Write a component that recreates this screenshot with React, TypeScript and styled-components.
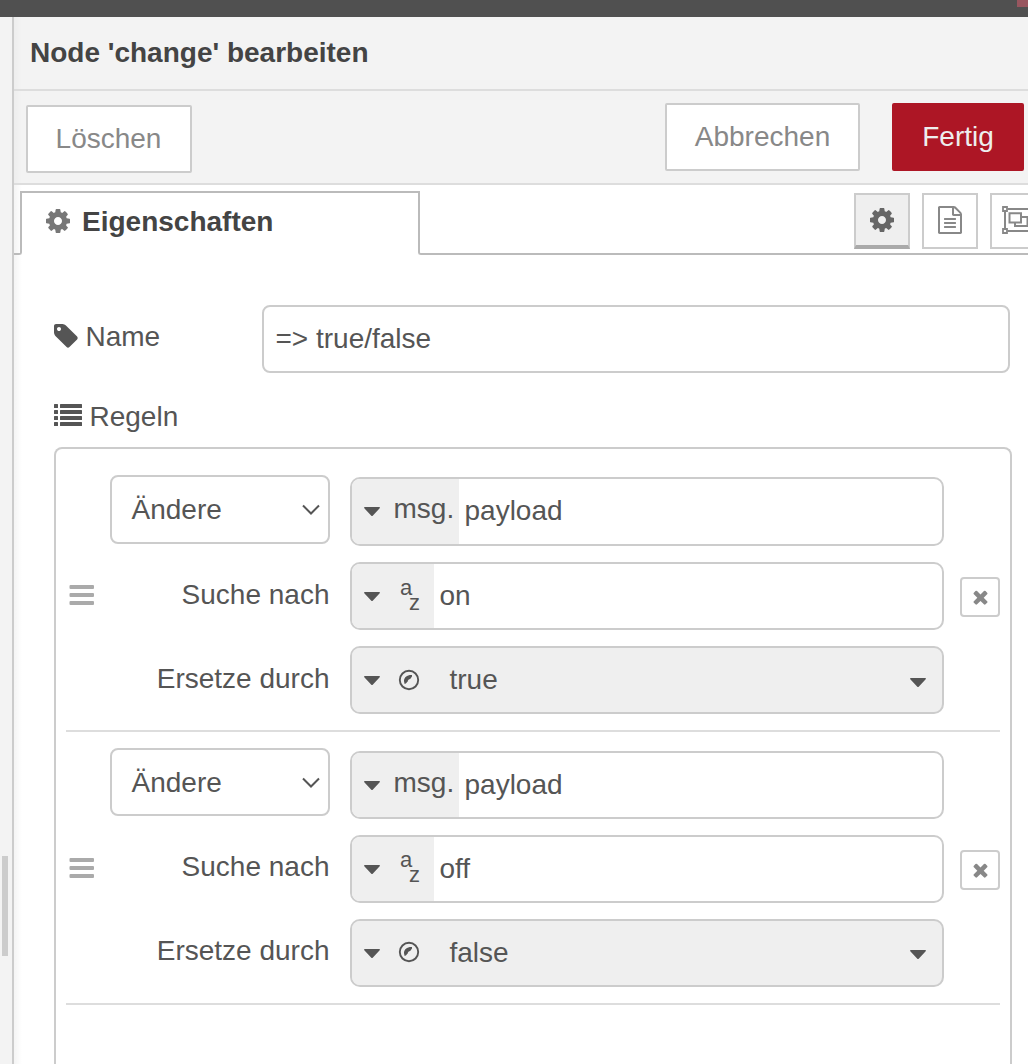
import React from "react";
import styled, { createGlobalStyle } from "styled-components";

const GlobalStyle = createGlobalStyle`
  * { box-sizing: border-box; }
  html, body { margin: 0; padding: 0; }
  body {
    width: 1028px;
    height: 1064px;
    overflow: hidden;
    background: #fff;
    color: #555;
    font-family: "Liberation Sans", Arial, Helvetica, sans-serif;
    font-size: 28px;
    line-height: 32px;
  }
  button, input { font: inherit; color: inherit; }
  svg { display: block; flex: none; }
`;

const Page = styled.div`
  display: flex;
  flex-direction: column;
  width: 1028px;
  height: 1064px;
  overflow: hidden;
`;

const TopBar = styled.header`
  display: flex;
  justify-content: flex-end;
  flex: none;
  height: 17px;
  background: #505050;
`;

const DeployEdge = styled.div`
  width: 11px;
  height: 7px;
  background: #98565f;
`;

const Main = styled.div`
  display: flex;
  flex: 1;
  min-height: 0;
`;

const Separator = styled.div`
  flex: none;
  width: 14px;
  padding: 839px 0 0 2px;
  background: #f3f3f3;
  border-right: 2px solid #ccc;
`;

const Grip = styled.div`
  width: 6px;
  height: 100px;
  background: #ccc;
`;

const Tray = styled.section`
  display: flex;
  flex-direction: column;
  flex: 1;
  min-width: 0;
  overflow: hidden;
  background: linear-gradient(to right, rgba(0, 0, 0, 0.045), rgba(0, 0, 0, 0) 8px) #fff;
`;

const TrayHeader = styled.h1`
  flex: none;
  height: 74px;
  margin: 0;
  padding: 20px 16px 0;
  background: rgba(231, 231, 231, 0.5);
  border-bottom: 2px solid #ddd;
  color: #444;
  font-size: 28px;
  font-weight: bold;
  line-height: 32px;
`;

const TrayToolbar = styled.div`
  display: flex;
  align-items: flex-start;
  flex: none;
  height: 94px;
  padding: 12px 4px 0 12px;
  background: rgba(231, 231, 231, 0.5);
  border-bottom: 2px solid #ddd;
`;

const Button = styled.button<{ $width: number; $primary?: boolean }>`
  width: ${(p) => p.$width}px;
  height: 68px;
  padding: 0;
  border: 2px solid ${(p) => (p.$primary ? "#ad1625" : "#ccc")};
  border-radius: 2px;
  background: ${(p) => (p.$primary ? "#ad1625" : "#fff")};
  color: ${(p) => (p.$primary ? "#eee" : "#888")};
`;

const DeleteButton = styled(Button)`
  margin: 2px auto 0 0;
  padding-right: 1px;
`;

const DoneButton = styled(Button)`
  margin-left: 32px;
`;

const TabBar = styled.div`
  display: flex;
  align-items: flex-start;
  flex: none;
  height: 70px;
  padding-top: 6px;
`;

const TabLead = styled.div`
  flex: none;
  width: 8px;
  height: 64px;
  border: solid #bbb;
  border-width: 0 2px 2px 0;
  border-bottom-right-radius: 3px;
`;

const Tab = styled.div`
  display: flex;
  align-items: flex-start;
  flex: none;
  width: 396px;
  height: 64px;
  padding: 12px 0 0 22px;
  border-top: 2px solid #bbb;
  color: #444;
  font-weight: bold;
`;

const TabIcon = styled.span`
  padding-top: 2px;
  color: #777;
`;

const TabText = styled.span`
  padding: 1px 0 0 10px;
`;

const TabTools = styled.div`
  display: flex;
  flex: 1;
  gap: 12px;
  min-width: 0;
  height: 64px;
  padding: 2px 0 0 434px;
  overflow: hidden;
  border: solid #bbb;
  border-width: 0 0 2px 2px;
  border-bottom-left-radius: 3px;
`;

const ToolButton = styled.button<{ $active?: boolean }>`
  display: flex;
  align-items: center;
  justify-content: center;
  flex: none;
  width: 56px;
  height: 56px;
  padding: ${(p) => (p.$active ? "0" : "0 0 2px")};
  border: 2px solid #ccc;
  ${(p) => p.$active && "border-bottom: 4px solid #aaa;"}
  background: ${(p) => (p.$active ? "#efefef" : "#fff")};
  color: ${(p) => (p.$active ? "#666" : "#888")};
`;

const Form = styled.form`
  display: flex;
  flex-direction: column;
  flex: 1;
  min-height: 0;
  padding: 50px 16px 0 40px;
`;

const NameRow = styled.div`
  display: flex;
  flex: none;
  height: 68px;
  padding-right: 2px;
`;

const NameLabel = styled.label`
  display: flex;
  gap: 5.5px;
  width: 208px;
  padding-top: 16px;
`;

const LabelIcon = styled.span`
  width: 26px;
  height: 28px;
  padding-top: 1px;
`;

const NameInput = styled.input`
  flex: 1;
  min-width: 0;
  padding: 0 12px 0 11.5px;
  border: 2px solid #ccc;
  border-radius: 8px;
  background: #fff;
  outline: none;
`;

const RulesLabel = styled.div`
  display: flex;
  flex: none;
  gap: 7.5px;
  height: 74px;
  padding-top: 28px;
`;

const RuleList = styled.ol`
  flex: 1;
  min-height: 0;
  margin: 0;
  padding: 8px 10px 0;
  list-style: none;
  border: 2px solid #ccc;
  border-bottom: 0;
  border-radius: 8px 8px 0 0;
`;

const RuleItem = styled.li<{ $top: number }>`
  display: flex;
  align-items: flex-start;
  padding: ${(p) => p.$top}px 0 16px;
  border-bottom: 2px solid #ddd;
`;

const Handle = styled.span`
  display: flex;
  width: 44px;
  padding: 110px 0 0 3px;
  color: #aaa;
`;

const Labels = styled.div`
  display: flex;
  flex-direction: column;
  width: 220px;
  text-align: right;
`;

const Select = styled.div<{ $height: number }>`
  display: flex;
  justify-content: space-between;
  height: ${(p) => p.$height}px;
  padding: 17px 8px 0 19.5px;
  border: 2px solid #ccc;
  border-radius: 8px;
  background: #fff;
`;

const SelectArrow = styled.span`
  padding-top: 10px;
`;

const FieldLabel = styled.span<{ $gap: number }>`
  padding: ${(p) => p.$gap}px 0.5px 0 0;
`;

const Fields = styled.div<{ $offset: number }>`
  display: flex;
  flex-direction: column;
  gap: 16px;
  width: 594px;
  margin-left: 20px;
  padding-top: ${(p) => p.$offset}px;
`;

const TypedInput = styled.div<{ $height?: number; $filled?: boolean }>`
  display: flex;
  height: ${(p) => p.$height ?? 68}px;
  overflow: hidden;
  border: 2px solid #ccc;
  border-radius: 10px;
  background: ${(p) => (p.$filled ? "#efefef" : "#fff")};
`;

const TypeButton = styled.span<{ $width: number }>`
  display: flex;
  align-items: flex-start;
  flex: none;
  width: ${(p) => p.$width}px;
  padding-left: 12px;
  background: #efefef;
`;

const CaretBox = styled.span`
  padding-top: 28px;
`;

const MessagePrefix = styled.span`
  padding: 14px 0 0 13.5px;
`;

const TypeIcon = styled.span<{ $top: number }>`
  padding: ${(p) => p.$top}px 0 0 18px;
`;

const Value = styled.span<{ $left?: number }>`
  flex: 1;
  padding: 16px 0 0 ${(p) => p.$left ?? 5.5}px;
`;

const OptionCaret = styled.span<{ $top: number }>`
  padding: ${(p) => p.$top}px 16px 0 0;
`;

const RemoveButton = styled.button`
  display: flex;
  align-items: center;
  justify-content: center;
  width: 40px;
  height: 40px;
  margin: 102px 0 0 16px;
  padding: 2px 0 0;
  border: 2px solid #ccc;
  border-radius: 4px;
  background: #fff;
  color: #888;
`;

const Letters = styled.span`
  display: flex;
  width: 22px;
  padding-left: 2px;
  font-size: 22px;
  line-height: 22px;
`;

const Letter = styled.span<{ $shift: number }>`
  width: 9px;
  margin-top: ${(p) => p.$shift}px;
`;

const CogIcon = () => (
  <svg width="28" height="28" viewBox="0 0 1792 1792" fill="currentColor">
    <path d="M1152 896q0-106-75-181t-181-75-181 75-75 181 75 181 181 75 181-75 75-181zm512-109v222q0 12-8 23t-20 13l-185 28q-19 54-39 91 35 50 107 138 10 12 10 25t-9 23q-27 37-99 108t-94 71q-12 0-26-9l-138-108q-44 23-91 38-16 136-29 186-7 28-36 28h-222q-14 0-24.5-8.5t-11.5-21.5l-28-184q-49-16-90-37l-141 107q-10 9-25 9-14 0-25-11-126-114-165-168-7-10-7-23 0-12 8-23 15-21 51-66.5t54-70.5q-27-50-41-99l-183-27q-13-2-21-12.5t-8-23.5v-222q0-12 8-23t19-13l186-28q14-46 39-92-40-57-107-138-10-12-10-24 0-10 9-23 26-36 98.5-107.5t94.5-71.5q13 0 26 10l138 107q44-23 91-38 16-136 29-186 7-28 36-28h222q14 0 24.5 8.5t11.5 21.5l28 184q49 16 90 37l142-107q9-9 24-9 13 0 25 10 129 119 165 170 7 8 7 22 0 12-8 23-15 21-51 66.5t-54 70.5q26 50 41 98l183 28q13 2 21 12.5t8 23.5z" />
  </svg>
);

const DocumentIcon = () => (
  <svg width="28" height="28" viewBox="0 0 1792 1792" fill="currentColor">
    <path d="M1596 380q28 28 48 76t20 88v1152q0 40-28 68t-68 28h-1344q-40 0-68-28t-28-68v-1600q0-40 28-68t68-28h896q40 0 88 20t76 48zm-444-244v376h376q-10-29-22-41l-313-313q-12-12-41-22zm384 1528v-1024h-416q-40 0-68-28t-28-68v-416h-768v1536h1280zm-1024-864q0-14 9-23t23-9h704q14 0 23 9t9 23v64q0 14-9 23t-23 9h-704q-14 0-23-9t-9-23v-64zm736 224q14 0 23 9t9 23v64q0 14-9 23t-23 9h-704q-14 0-23-9t-9-23v-64q0-14 9-23t23-9h704zm0 256q14 0 23 9t9 23v64q0 14-9 23t-23 9h-704q-14 0-23-9t-9-23v-64q0-14 9-23t23-9h704z" />
  </svg>
);

const GroupIcon = () => (
  <svg width="32" height="28" viewBox="0 0 32 28" fill="none" stroke="currentColor" strokeWidth="2">
    <path d="M5.500 3h21M5.500 25h21M3 5.500v17M29 5.500v17" />
    <path strokeWidth="1.800" d="M1 1h4v4H1zM27 1h4v4h-4zM1 23h4v4H1zM27 23h4v4h-4z" />
    <path d="M7.500 7.300h11.500v9.200H7.500zM19 11h6.500v9H13v-3.500" />
  </svg>
);

const TagIcon = () => (
  <svg width="28" height="28" viewBox="128 0 1792 1792" fill="currentColor">
    <path d="M576 448q0-53-37.5-90.5t-90.5-37.5-90.5 37.5-37.5 90.5 37.5 90.5 90.5 37.5 90.5-37.5 37.5-90.5zm1067 576q0 53-37 90l-491 492q-39 37-91 37-53 0-90-37l-715-716q-38-37-64.5-101t-26.5-117v-416q0-52 38-90t90-38h416q53 0 117 26.5t102 64.5l715 714q37 39 37 91z" />
  </svg>
);

const ListIcon = () => (
  <svg width="28" height="28" viewBox="0 0 28 28" fill="currentColor">
    {[3, 9, 15, 21].map((y) => (
      <g key={y}>
        <rect x="0" y={y} width="4" height="4" rx="0.5" />
        <rect x="6" y={y} width="22" height="4" rx="0.5" />
      </g>
    ))}
  </svg>
);

const BarsIcon = () => (
  <svg width="25" height="20" viewBox="0 0 25 20" fill="currentColor">
    {[0, 8, 16].map((y) => (
      <rect key={y} x="0.5" y={y} width="24.5" height="4" rx="1" />
    ))}
  </svg>
);

const CaretIcon = () => (
  <svg width="16" height="9" viewBox="0 0 16 9" fill="currentColor">
    <path d="M.7 0h14.600q1 .3.400 1.200L8.700 8.700q-.7.600-1.400 0L.3 1.200q-.6-.9.400-1.200z" />
  </svg>
);

const ChevronIcon = () => (
  <svg width="18" height="12" viewBox="0 0 18 12" fill="none" stroke="currentColor" strokeWidth="2">
    <path d="M1 1.500l8 8 8-8" />
  </svg>
);

const CloseIcon = () => (
  <svg width="21" height="21" viewBox="0 0 1792 1792" fill="currentColor">
    <path d="M1490 1190q0 40-28 68l-136 136q-28 28-68 28t-68-28l-294-294-294 294q-28 28-68 28t-68-28l-136-136q-28-28-28-68t28-68l294-294-294-294q-28-28-28-68t28-68l136-136q28-28 68-28t68 28l294 294 294-294q28-28 68-28t68 28l136 136q28 28 28 68t-28 68l-294 294 294 294q28 28 28 68z" />
  </svg>
);

const BoolIcon = () => (
  <svg width="22" height="32" viewBox="0 0 22 32" fill="none">
    <circle cx="11" cy="16" r="9.200" stroke="currentColor" strokeWidth="1.900" />
    <path
      d="M6 17.200C6 13.300 9 10.800 14 11v1.500L12.200 15c-1.400.3-2.300 1.200-2.500 2.500L7.800 19.600 6.600 20z"
      fill="currentColor"
    />
  </svg>
);

const StringIcon = () => (
  <Letters>
    <Letter $shift={-3}>a</Letter>
    <Letter $shift={12}>z</Letter>
  </Letters>
);

type Rule = {
  search: string;
  replace: string;
  top: number;
  selectHeight: number;
  fieldOffset: number;
  firstHeight: number;
  iconTop: number;
  optionTop: number;
};

const rules: Rule[] = [
  { search: "on", replace: "true", top: 18, selectHeight: 69, fieldOffset: 2, firstHeight: 69, iconTop: 16, optionTop: 30 },
  { search: "off", replace: "false", top: 16, selectHeight: 68, fieldOffset: 3, firstHeight: 68, iconTop: 15, optionTop: 29 },
];

const RuleRow = ({ rule }: { rule: Rule }) => (
  <RuleItem $top={rule.top}>
    <Handle>
      <BarsIcon />
    </Handle>
    <Labels>
      <Select $height={rule.selectHeight}>
        Ändere
        <SelectArrow>
          <ChevronIcon />
        </SelectArrow>
      </Select>
      <FieldLabel $gap={35}>Suche nach</FieldLabel>
      <FieldLabel $gap={52}>Ersetze durch</FieldLabel>
    </Labels>
    <Fields $offset={rule.fieldOffset}>
      <TypedInput $height={rule.firstHeight}>
        <TypeButton $width={107}>
          <CaretBox>
            <CaretIcon />
          </CaretBox>
          <MessagePrefix>msg.</MessagePrefix>
        </TypeButton>
        <Value>payload</Value>
      </TypedInput>
      <TypedInput>
        <TypeButton $width={82}>
          <CaretBox>
            <CaretIcon />
          </CaretBox>
          <TypeIcon $top={rule.iconTop}>
            <StringIcon />
          </TypeIcon>
        </TypeButton>
        <Value>{rule.search}</Value>
      </TypedInput>
      <TypedInput $filled>
        <TypeButton $width={82}>
          <CaretBox>
            <CaretIcon />
          </CaretBox>
          <TypeIcon $top={rule.iconTop}>
            <BoolIcon />
          </TypeIcon>
        </TypeButton>
        <Value $left={15.5}>{rule.replace}</Value>
        <OptionCaret $top={rule.optionTop}>
          <CaretIcon />
        </OptionCaret>
      </TypedInput>
    </Fields>
    <RemoveButton type="button">
      <CloseIcon />
    </RemoveButton>
  </RuleItem>
);

export default function App() {
  return (
    <Page>
      <GlobalStyle />
      <TopBar>
        <DeployEdge />
      </TopBar>
      <Main>
        <Separator>
          <Grip />
        </Separator>
        <Tray>
          <TrayHeader>Node 'change' bearbeiten</TrayHeader>
          <TrayToolbar>
            <DeleteButton $width={166}>Löschen</DeleteButton>
            <Button $width={195}>Abbrechen</Button>
            <DoneButton $width={132} $primary>
              Fertig
            </DoneButton>
          </TrayToolbar>
          <TabBar>
            <TabLead />
            <Tab>
              <TabIcon>
                <CogIcon />
              </TabIcon>
              <TabText>Eigenschaften</TabText>
            </Tab>
            <TabTools>
              <ToolButton $active>
                <CogIcon />
              </ToolButton>
              <ToolButton>
                <DocumentIcon />
              </ToolButton>
              <ToolButton>
                <GroupIcon />
              </ToolButton>
            </TabTools>
          </TabBar>
          <Form>
            <NameRow>
              <NameLabel>
                <LabelIcon>
                  <TagIcon />
                </LabelIcon>
                Name
              </NameLabel>
              <NameInput defaultValue="=> true/false" />
            </NameRow>
            <RulesLabel>
              <ListIcon />
              Regeln
            </RulesLabel>
            <RuleList>
              {rules.map((rule) => (
                <RuleRow key={rule.search} rule={rule} />
              ))}
            </RuleList>
          </Form>
        </Tray>
      </Main>
    </Page>
  );
}
